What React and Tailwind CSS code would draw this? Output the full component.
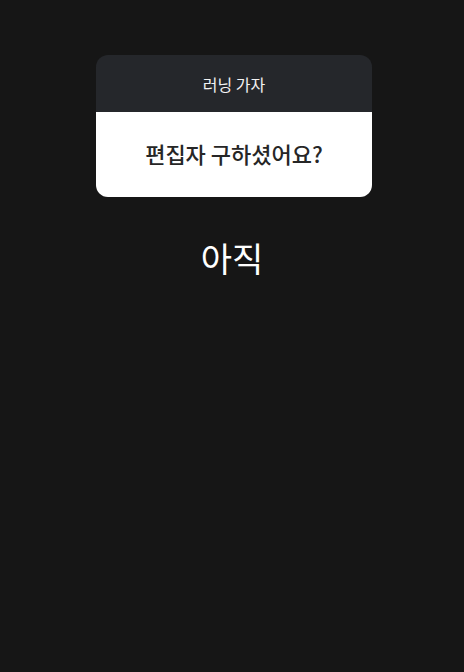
export default function App() {
  return (
    <div
      className="w-[464px] h-[672px] bg-[#161616] flex flex-col items-center pt-[55px]"
      style={{ fontFamily: '"Noto Sans CJK KR", "Noto Sans", sans-serif' }}
    >
      <div className="w-[276px] ml-[4px] rounded-[12px] overflow-hidden">
        <div className="h-[57px] bg-[#25272b] flex items-center justify-center text-[16px] text-[#f2f2f2]">
          러닝 가자
        </div>
        <div className="h-[85px] bg-white flex items-center justify-center pb-[2px] text-[22px] font-medium text-[#262626]">
          편집자 구하셨어요?
        </div>
      </div>
      <div className="mt-[38px] text-[34px] leading-[46px] text-white">아직</div>
    </div>
  )
}
